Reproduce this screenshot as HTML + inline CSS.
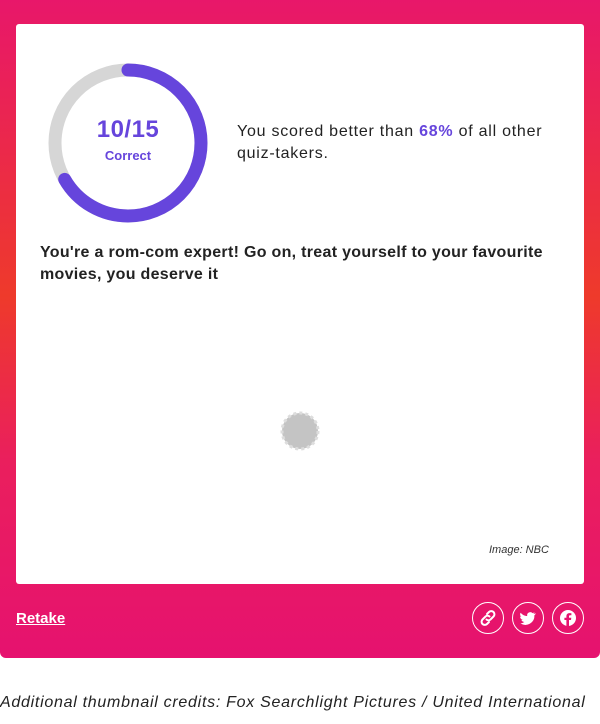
<!DOCTYPE html>
<html><head><style>
body{margin:0;width:600px;height:724px;background:#fff;font-family:"Liberation Sans",sans-serif;position:relative;overflow:hidden}
.bg{position:absolute;left:0;top:0;width:600px;height:658px;border-radius:0 0 6px 6px;background:linear-gradient(180deg,#e8176a 0%,#ee3a2b 45%,#ea1f5d 70%,#e6126f 100%)}
.card{position:absolute;left:16px;top:24px;width:568px;height:560px;background:#fff;border-radius:3px}
.ring{position:absolute;left:48px;top:63px}
.score{position:absolute;left:48px;top:116px;width:160px;text-align:center;color:#6645dc;font-weight:bold}
.txt{position:absolute;left:237px;top:121px;font-size:16px;color:#222;line-height:22px;letter-spacing:0.75px}
.txt b{color:#6645dc}
.msg{position:absolute;left:40px;top:242px;width:540px;font-size:16px;font-weight:bold;color:#222;line-height:22px;letter-spacing:0.3px}
.credit{position:absolute;left:489px;top:544px;font-size:11px;font-style:italic;color:#333}
.retake{position:absolute;left:16px;top:610px;color:#fff;font-weight:bold;font-size:15px;text-decoration:underline}
.ic{position:absolute;top:602px;width:30px;height:30px;border:1.5px solid #fff;border-radius:50%}
.foot{position:absolute;left:0;top:694px;font-size:16px;font-style:italic;color:#222;letter-spacing:0.72px;white-space:nowrap}
</style></head><body>
<div class="bg"></div>
<div class="card"></div>
<svg class="ring" width="160" height="160" viewBox="0 0 160 160">
<circle cx="80" cy="80" r="73" fill="none" stroke="#d6d6d6" stroke-width="13"/>
<circle cx="80" cy="80" r="73" fill="none" stroke="#6645dc" stroke-width="13" stroke-linecap="round" stroke-dasharray="305.8 1000" transform="rotate(-90 80 80)"/>
</svg>
<div class="score"><div style="font-size:24px;letter-spacing:0.5px">10/15</div><div style="font-size:13px;margin-top:4px">Correct</div></div>
<div class="txt">You scored better than <b>68%</b> of all other<br>quiz-takers.</div>
<div class="msg">You're a rom-com expert! Go on, treat yourself to your favourite movies, you deserve it</div>
<svg style="position:absolute;left:280px;top:411px" width="40" height="40"><circle cx="20" cy="20" r="18" fill="#c4c4c4" stroke="#ddd" stroke-width="3" stroke-dasharray="3 3"/></svg>
<div class="credit">Image: NBC</div>
<div class="retake">Retake</div>
<div class="ic" style="left:472px"><svg width="30" height="30" viewBox="0 0 30 30"><g fill="none" stroke="#fff" stroke-width="2" stroke-linecap="round"><path d="M14 11l2-2a3 3 0 0 1 4.5 4.5l-3 3a3 3 0 0 1-4 0"/><path d="M16 19l-2 2a3 3 0 0 1-4.5-4.5l3-3a3 3 0 0 1 4 0"/></g></svg></div>
<div class="ic" style="left:512px"><svg width="30" height="30" viewBox="0 0 30 30"><path fill="#fff" d="M22 10.5c-.6.3-1.2.4-1.8.5.7-.4 1.1-1 1.4-1.7-.6.4-1.3.6-2 .8a3.2 3.2 0 0 0-5.4 2.9c-2.6-.1-5-1.4-6.6-3.3-.9 1.5-.4 3.300.9 4.2-.5 0-1-.2-1.4-.4 0 1.6 1.1 2.9 2.6 3.2-.5.1-1 .2-1.4.1.4 1.3 1.6 2.2 3 2.2A6.5 6.5 0 0 1 7.5 20.4 9 9 0 0 0 21.4 12.3c.6-.5 1.1-1 1.5-1.8z"/></svg></div>
<div class="ic" style="left:552px"><svg width="30" height="30" viewBox="0 0 30 30"><circle cx="15" cy="15" r="8" fill="#fff"/><path fill="#e6126f" d="M16 23v-6h2l.3-2.3H16v-1.4c0-.7.2-1.1 1.1-1.1h1.3v-2a16 16 0 0 0-1.9-.1c-1.9 0-3.1 1.1-3.1 3.2v1.4h-2V17h2v6z"/></svg></div>
<div class="foot">Additional thumbnail credits: Fox Searchlight Pictures / United International</div>
</body></html>
